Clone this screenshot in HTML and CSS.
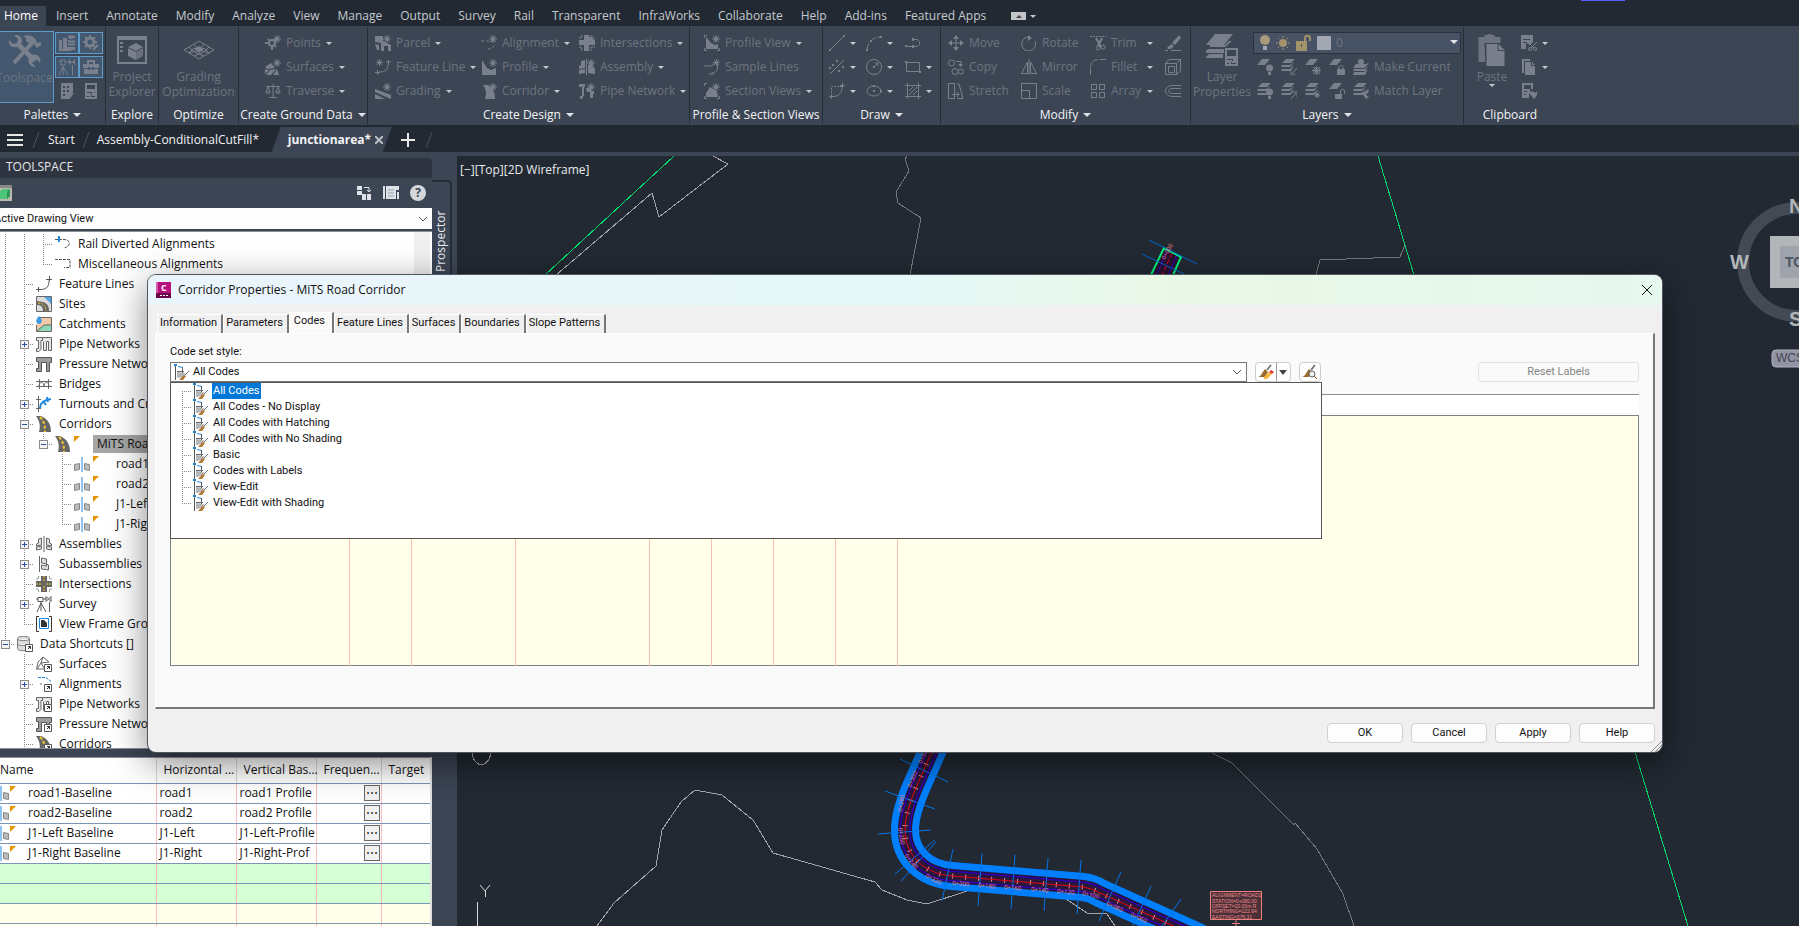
FILE: index.html
```html
<!DOCTYPE html>
<html lang="en">
<head>
    <meta charset="UTF-8">
    <meta name="viewport" content="width=device-width, initial-scale=1.0">
    <title>junctionarea - Corridor Properties</title>
    <link rel="stylesheet" href="styles.css">
</head>
<body>
    <!-- icon sprite, everything in it is drawn through <use> -->
    <svg class="sprite" aria-hidden="true">
        <symbol id="star" viewBox="0 0 8 8"><path d="M4 0v8M0 4h8M1 1l6 6M7 1L1 7" stroke="currentColor" stroke-width="1"/><circle cx="4" cy="4" r="2" fill="currentColor"/></symbol>
        <symbol id="tools" viewBox="0 0 32 32"><path fill="none" stroke="currentColor" stroke-width="5" d="M8 8l18 18"/><path fill="currentColor" d="M0 5l4 4 4-1 1-4-4-4c6-1 10 4 7 9l-4 3C3 13-1 10 0 5zM23 20c5-2 10 3 8 8l-4-4-3 1-1 3 4 4c-6 0-9-5-7-9z"/><path d="M23 8L5 28" stroke="currentColor" stroke-width="4"/><path fill="currentColor" d="M14 1c6-2 10 0 13 4l1 3 4-1v3l-4 3-3-4-3 1-5-4c1-3-1-4-3-5z"/></symbol>
        <symbol id="prospect" viewBox="0 0 16 16"><path fill="currentColor" d="M0 5h3v9h9v2H0zM4 3h4v9h8v3H4zM9 1c2-1 5-1 7 0v2c-2 1-5 1-7 0zM9 5c2 1 5 1 7 0v2c-2 1-5 1-7 0zM9 8c2 1 5 1 7 0v2c-2 1-5 1-7 0z"/></symbol>
        <symbol id="gear" viewBox="0 0 16 16"><circle cx="7" cy="7" r="4" fill="none" stroke="currentColor" stroke-width="3"/><path d="M7 0v3M7 11v3M0 7h3M11 7h3M2 2l2 2M10 10l2 2M12 2l-2 2M4 10l-2 2" stroke="currentColor" stroke-width="2"/><path d="M10 15l5-5" stroke="currentColor" stroke-width="2"/></symbol>
        <symbol id="station" viewBox="0 0 16 16"><path fill="none" stroke="currentColor" d="M0 2h3M2 1h4v5H2zM4 7v9M4 8L0 16M4 8l5 8M7 3h3M13.5 6v10"/><path fill="currentColor" d="M10 0l6 6V0l-6 6z"/></symbol>
        <symbol id="toolbox" viewBox="0 0 16 16"><path fill="currentColor" d="M0 5h16v4h-5V8H9v1H7V8H5v1H0zM1 10h4v1h2v-1h2v1h2v-1h4v5H1z"/><path d="M5 5V2h6v3" fill="none" stroke="currentColor" stroke-width="2"/></symbol>
        <symbol id="building" viewBox="0 0 16 16"><path fill="currentColor" fill-rule="evenodd" d="M2 0h12v9l-3 3v4H2zM4 3v2h2V3zm4 0v2h2V3zM4 7v2h2V7zm4 0v2h2V7zm-4 4v2h2v-2z"/><path d="M10 15l4-5" stroke="currentColor" stroke-width="2"/></symbol>
        <symbol id="panelset" viewBox="0 0 16 16"><path fill="currentColor" fill-rule="evenodd" d="M2 0h12v16H2zM4 2v4h8V2zm0 7v1h4v1h1V9zm7 0v1h1V9zm-7 4v1h2v-1zm4-1v2h4v-1H9v-1z"/></symbol>
        <symbol id="project" viewBox="0 0 32 32"><path fill="none" stroke="currentColor" stroke-width="2" d="M2 4h28v25H2z"/><path fill="currentColor" d="M1 2h30v4H1zM4 8h3v2H4zM4 12h3v2H4zM4 16h3v2H4zM12 14l8 4v8l-8-4z"/><path fill="currentColor" opacity=".75" d="M20 18l7-4v8l-7 4z"/><path fill="currentColor" d="M12 13l8-4 7 4-7 4z"/></symbol>
        <symbol id="optimize" viewBox="0 0 32 20"><path fill="none" stroke="currentColor" stroke-width="1" d="M1 10L16 1l15 9-15 9zM6 7l5 5 10 4M11 4l5 6 11 3M26 7l-5 5-10 4M21 4l-5 6-10 3M6 13l5-5 5 1 5-1 5 5"/><path fill="currentColor" d="M11 9l5-3 5 3-5 4z"/></symbol>
        <symbol id="points" viewBox="0 0 16 16"><circle cx="7" cy="8" r="3" fill="none" stroke="currentColor" stroke-width="2"/><path stroke="currentColor" stroke-width="2" d="M0 8h3M7 12v3M4 5l-1-1M10 11l1 1"/><use href="#star" x="8" y="0" width="8" height="8"/></symbol>
        <symbol id="surfaces" viewBox="0 0 16 16"><path fill="currentColor" d="M0 8l6-4 4 5-7 1zM0 10l4 1-4 4zM5 11l6-1-5 6H1zM12 10l2 6H8z"/><use href="#star" x="8" y="0" width="8" height="8"/></symbol>
        <symbol id="traverse" viewBox="0 0 16 16"><path fill="none" stroke="currentColor" d="M1 3.5h14M8 1v14M4 14.5h8M1 9l2-5 2 5zM11 9l2-5 2 5zM1 9c0 2 4 2 4 0M11 9c0 2 4 2 4 0"/></symbol>
        <symbol id="parcel" viewBox="0 0 16 16"><path fill="currentColor" d="M0 1h8v5l8 4v6h-3v-5H9v5H6V8L0 7zM0 9l4 1v5H2z"/><use href="#star" x="8" y="0" width="8" height="8"/></symbol>
        <symbol id="feature" viewBox="0 0 16 16"><path fill="none" stroke="currentColor" d="M0 13.5h5M2.5 11v5M11 3h5M13.5 1v5M4 13c7 0 9-3 9-7"/><use href="#star" x="1" y="0" width="7" height="7"/></symbol>
        <symbol id="grading" viewBox="0 0 16 16"><path fill="currentColor" d="M0 6l16 6v4L0 9zM0 11l10 5H0z"/><use href="#star" x="8" y="0" width="8" height="8"/></symbol>
        <symbol id="align" viewBox="0 0 16 16"><path fill="none" stroke="currentColor" stroke-dasharray="3 2" d="M0 6h8c7 0 6 8 0 8H5"/><use href="#star" x="8" y="0" width="8" height="8"/></symbol>
        <symbol id="profile" viewBox="0 0 16 16"><path fill="currentColor" d="M1 1l5 8 4 2 5-2v7H1z"/><use href="#star" x="8" y="0" width="8" height="8"/></symbol>
        <symbol id="corridor" viewBox="0 0 16 16"><path fill="currentColor" d="M2 2h5c5 3 7 7 7 14H4c2-5 1-10-2-14z"/><use href="#star" x="8" y="0" width="8" height="8"/></symbol>
        <symbol id="inter" viewBox="0 0 16 16"><path fill="currentColor" d="M5 0h5v5h6v5h-6v6H5v-6H0V5h5z"/><path fill="none" stroke="currentColor" d="M0 3h2l1-3M0 12h2l1 4M12 16v-4h4"/><use href="#star" x="8" y="0" width="8" height="8"/></symbol>
        <symbol id="assembly" viewBox="0 0 16 16"><path fill="currentColor" d="M2 2l4-1v8l-6 1V7l2-1zM0 11l6-1v4l-6 1zM9 6h4l3 4v5l-7-1z"/><path d="M7.5 0v16" stroke="currentColor"/><use href="#star" x="8" y="0" width="8" height="8"/></symbol>
        <symbol id="pipe" viewBox="0 0 16 16"><path fill="currentColor" d="M0 1h6v3H5v8l-2 4H1v-3h2V4H0zM7 5h5v3h3v3h-1v4h-3V9H8z"/><use href="#star" x="8" y="0" width="8" height="8"/></symbol>
        <symbol id="pview" viewBox="0 0 16 16"><path fill="none" stroke="currentColor" d="M3 .5H.5V3M.5 13v2.5H3M13 15.5h2.5V13"/><path fill="currentColor" d="M2 2l5 6 4 2 3-1v5H2z"/><use href="#star" x="8" y="0" width="8" height="8"/></symbol>
        <symbol id="sline" viewBox="0 0 16 16"><path fill="none" stroke="currentColor" d="M0 7h6c3 0 3-3 7-3M13.5 2v7c0 3-3 5-6 5M5 15h5"/><use href="#star" x="9" y="0" width="7" height="7"/></symbol>
        <symbol id="sview" viewBox="0 0 16 16"><path fill="none" stroke="currentColor" d="M3 .5H.5V3M.5 13v2.5H3M13 15.5h2.5V13"/><path fill="currentColor" d="M2 10l4-6 7 4 1 6H2z"/><use href="#star" x="8" y="0" width="8" height="8"/></symbol>
        <symbol id="line" viewBox="0 0 16 16"><path stroke="currentColor" d="M1 15L15 1"/><path fill="currentColor" d="M0 14h2v2H0zM14 0h2v2h-2z"/></symbol>
        <symbol id="arc" viewBox="0 0 16 16"><path fill="none" stroke="currentColor" stroke-dasharray="7 2" d="M1 15C2 6 7 2 15 2"/><path fill="currentColor" d="M0 14h2v2H0zM14 1h2v2h-2zM4 5h2v2H4z"/></symbol>
        <symbol id="pline" viewBox="0 0 16 16"><path fill="none" stroke="currentColor" d="M8 4.5h3c5 0 5 7 0 7H8M1 11.5h6"/><path fill="currentColor" d="M0 10h2v2H0zM7 10h2v3H7zM7 3h2v3H7z"/></symbol>
        <symbol id="xline" viewBox="0 0 16 16"><path stroke="currentColor" d="M1 15L15 1"/><path fill="currentColor" d="M7 1h2v2H7zM3 5h2v2H3zM13 7h2v2h-2zM9 11h2v2H9zM0 8h2v2H0z"/></symbol>
        <symbol id="circle" viewBox="0 0 16 16"><circle cx="8" cy="8" r="7.5" fill="none" stroke="currentColor"/><path stroke="currentColor" fill="none" d="M8 8l4-4M9 4h3v3"/><path fill="currentColor" d="M7 7h2v2H7z"/></symbol>
        <symbol id="rect" viewBox="0 0 16 16"><path fill="none" stroke="currentColor" d="M1.5 3.5h13v9h-13z"/><path fill="currentColor" d="M0 2h2v2H0zM14 12h2v2h-2z"/></symbol>
        <symbol id="pcurve" viewBox="0 0 16 16"><path fill="none" stroke="currentColor" stroke-dasharray="2 1" d="M2.5 13V3.5H13"/><path fill="none" stroke="currentColor" d="M4 13.5c6 0 9-4 9-9M13.5 0v5M0 13.5h5M2.5 11v5M11 2.5h5"/></symbol>
        <symbol id="ellipse" viewBox="0 0 16 16"><ellipse cx="8" cy="8" rx="7" ry="5" fill="none" stroke="currentColor"/><path fill="currentColor" d="M7 7h2v2H7zM7 2h2v2H7zM14 7h2v2h-2z"/></symbol>
        <symbol id="hatch" viewBox="0 0 16 16"><path fill="none" stroke="currentColor" d="M2.5 0v16M13.5 0v16M0 2.5h16M0 13.5h16M4 8l4-4M4 12l8-8M8 12l4-4"/></symbol>
        <symbol id="move" viewBox="0 0 16 16"><path stroke="currentColor" d="M8 2v12M2 8h12"/><path fill="currentColor" d="M8 0l3 4H5zM8 16l3-4H5zM0 8l4-3v6zM16 8l-4-3v6z"/></symbol>
        <symbol id="copy" viewBox="0 0 16 16"><g fill="none" stroke="currentColor"><circle cx="3.5" cy="4" r="3"/><circle cx="7" cy="12.5" r="3"/><circle cx="13" cy="12.5" r="2.5"/><path d="M8 2.5h5v3"/></g><path fill="currentColor" d="M10 5h5l-2 3z"/></symbol>
        <symbol id="stretch" viewBox="0 0 16 16"><path fill="none" stroke="currentColor" d="M.5.5h6v15h-6zM9 1h2l4 14.5H9"/><path fill="none" stroke="currentColor" d="M4 11.5h7M9 9l2 2.5L9 14"/></symbol>
        <symbol id="rotate" viewBox="0 0 16 16"><path fill="none" stroke="currentColor" d="M8 2a7 7 0 1 0 6 4"/><path fill="currentColor" d="M7 0l4 3-4 3z"/></symbol>
        <symbol id="mirror" viewBox="0 0 16 16"><path fill="none" stroke="currentColor" d="M6.5 3v11.5h-6zM9.5 3v11.5h6zM8 0v16"/></symbol>
        <symbol id="scale" viewBox="0 0 16 16"><path fill="none" stroke="currentColor" d="M.5.5h15v15H.5zM.5 7.5h8v8"/></symbol>
        <symbol id="trim" viewBox="0 0 16 16"><path fill="none" stroke="currentColor" stroke-dasharray="2 1" d="M0 1.5h16"/><path stroke="currentColor" stroke-width="2" d="M6 3l5 9M12 3L8 11"/><g fill="none" stroke="currentColor"><circle cx="8" cy="13" r="2"/><circle cx="13" cy="12" r="2"/></g></symbol>
        <symbol id="fillet" viewBox="0 0 16 16"><path fill="none" stroke="currentColor" d="M.5 16V9M.5 8C1 3 4 1 8 .5M10 .5h6"/></symbol>
        <symbol id="array" viewBox="0 0 16 16"><path fill="none" stroke="currentColor" d="M1.5 1.5h5v5h-5zM9.5 1.5h5v5h-5zM1.5 9.5h5v5h-5zM9.5 9.5h5v5h-5z"/></symbol>
        <symbol id="erase" viewBox="0 0 16 16"><path fill="currentColor" d="M14 0l2 3-6 7-3-2zM6 9l3 2-3 3H3l-1-1z"/><path stroke="currentColor" d="M0 15.5h3M6 15.5h10"/></symbol>
        <symbol id="box" viewBox="0 0 16 16"><path fill="none" stroke="currentColor" d="M.5 4.5h11v11H.5zM3.5 7.5h6v6h-6zM.5 4.5L4 .5h11.5V12l-4 3.5M11.5 4.5l4-4"/></symbol>
        <symbol id="offset" viewBox="0 0 16 16"><path fill="none" stroke="currentColor" d="M16 2.5H8c-10 0-10 11 0 11h8M16 5.5H8c-6 0-6 5 0 5h8"/></symbol>
        <symbol id="layerbig" viewBox="0 0 32 32"><path fill="currentColor" d="M9 0h18l-9 11H0zM4 13h15l7-6h-3l-4 4H4zM0 17l2-2h18v4H0zM0 23l3-3h14v4H0z"/><path fill="#3c4554" d="M18 13h14v19H18z"/><path fill="currentColor" fill-rule="evenodd" d="M19 14h13v18H19zM21 16v6h9v-6zm0 9v1h5v1h1v-2zm0 4v1h2v-1zm4-1v2h5v-1h-4v-1z"/></symbol>
        <symbol id="lay1" viewBox="0 0 16 16"><path fill="currentColor" d="M5 0h8L8 6H0z"/></symbol>
        <symbol id="lay3" viewBox="0 0 16 16"><path fill="currentColor" d="M5 0h9l-4 4H1zM1 6h8l4-3-3 4-1 1H0zM1 10h8l4-4-2 4-2 2H0z"/></symbol>
        <symbol id="lbulb" viewBox="0 0 16 16"><use href="#lay1"/><circle cx="12.5" cy="9" r="3.5" fill="currentColor"/><path fill="currentColor" d="M11 13h3v3h-3z"/></symbol>
        <symbol id="liso" viewBox="0 0 16 16"><use href="#lay3"/><path fill="none" stroke="currentColor" d="M16 9l-5 6M10 11v5h5"/></symbol>
        <symbol id="lfreeze" viewBox="0 0 16 16"><use href="#lay1"/><path fill="none" stroke="currentColor" d="M11.5 7v9M7 11.5h9M8 8l7 7M15 8l-7 7"/><circle cx="11.5" cy="11.5" r="3" fill="none" stroke="currentColor"/></symbol>
        <symbol id="llock" viewBox="0 0 16 16"><use href="#lay1"/><path fill="currentColor" d="M8 10h8v6H8z"/><path fill="none" stroke="currentColor" d="M10 10V8c0-2 4-2 4 0v2"/></symbol>
        <symbol id="lmake" viewBox="0 0 16 16"><circle cx="8" cy="3" r="3" fill="currentColor"/><path fill="currentColor" d="M3 5h10l3-1-5 5H0zM1 10h10l4-3-3 5H0zM1 13h10l4-3-3 6H0z"/></symbol>
        <symbol id="lon" viewBox="0 0 16 16"><use href="#lay3"/><circle cx="12.5" cy="9" r="3.5" fill="currentColor"/><path fill="currentColor" d="M11 13h3v3h-3z"/></symbol>
        <symbol id="luniso" viewBox="0 0 16 16"><use href="#lay3"/><path fill="none" stroke="currentColor" d="M10 16l5-6M11 9h5v5"/></symbol>
        <symbol id="lthaw" viewBox="0 0 16 16"><use href="#lay3"/><circle cx="12" cy="12" r="2" fill="currentColor"/><path stroke="currentColor" stroke-dasharray="1 1" d="M12 8v8M8 12h8M9 9l6 6M15 9l-6 6"/></symbol>
        <symbol id="lunlock" viewBox="0 0 16 16"><use href="#lay1"/><path fill="currentColor" d="M6 11h7v5H6z"/><path fill="none" stroke="currentColor" d="M11.5 11V8c0-2 4-2 4 0v3"/></symbol>
        <symbol id="lmatch" viewBox="0 0 16 16"><use href="#lay3"/><path fill="currentColor" d="M8 9l3 1 4-4 1 2-3 4 3 2-3 2z"/></symbol>
        <symbol id="bulb" viewBox="0 0 10 16"><circle cx="5" cy="5" r="5" fill="#a89a78"/><path fill="#9fa5ad" d="M3 11h4v4H3z"/></symbol>
        <symbol id="sun" viewBox="0 0 16 16"><circle cx="8" cy="8" r="4" fill="#a4926a"/><path stroke="#a4926a" d="M8 1v2M8 13v2M1 8h2M13 8h2M3 3l1 1M12 12l1 1M13 3l-1 1M4 12l-1 1"/></symbol>
        <symbol id="lock" viewBox="0 0 16 16"><path fill="#a4926a" fill-rule="evenodd" d="M0 6h11v10H0zM5 9v3h1V9z"/><path fill="none" stroke="#a4926a" stroke-width="2" d="M9 6V3c0-3 5-3 5 0v3"/></symbol>
        <symbol id="paste" viewBox="0 0 27 32"><path fill="currentColor" opacity=".8" d="M0 3h6V1h3V0h4v1h3v2h6v6H7v19H0z"/><path fill="#3c4554" d="M6 9h14v4h7v19H7z"/><path fill="currentColor" d="M8 10h11v7h7v15H8zM20 10l6 6h-6z"/></symbol>
        <symbol id="cut" viewBox="0 0 16 16"><path fill="currentColor" fill-rule="evenodd" d="M0 0h12v7l-3 3-4-2v6H0zM2 4v1h7V4zm0 3v1h4V7z"/><path stroke="currentColor" d="M7 7l6 6M16 7l-6 6"/><g fill="none" stroke="currentColor"><circle cx="9" cy="14" r="1.5"/><circle cx="14" cy="14" r="1.5"/></g></symbol>
        <symbol id="pages" viewBox="0 0 16 16"><path fill="currentColor" d="M1 0h8v2H3v12H1zM4 3h6v4h4v9H4zM11 3l3 3h-3z"/></symbol>
        <symbol id="pmatch" viewBox="0 0 16 16"><path fill="currentColor" fill-rule="evenodd" d="M1 0h11v6H9v4H8v5H1zM3 2v4h7V2zm0 6v1h3V8zm0 3v1h2v-1z"/><path fill="currentColor" d="M8 10l3-2 3 2 2-2v4l-3 4z"/></symbol>

        <symbol id="t-rail" viewBox="0 0 16 16"><path fill="none" stroke="#555" stroke-dasharray="3 1" d="M0 3.5h9c7 0 7 7 0 8.5"/><path fill="#1e87e0" d="M3 0h2v6H3z"/></symbol>
        <symbol id="t-misc" viewBox="0 0 16 16"><path fill="none" stroke="#555" stroke-dasharray="3 1" d="M0 3.5h15v8H9"/></symbol>
        <symbol id="t-feature" viewBox="0 0 16 16"><path fill="none" stroke="#555" d="M0 13.5h6M2.5 11v5M10 3.5h6M13.5 0v5M4 13.5c7 0 9-3 9-9"/></symbol>
        <symbol id="t-sites" viewBox="0 0 16 16"><path fill="#ddd" stroke="#666" d="M.5.5h15v15H.5z"/><path fill="#56a5e6" d="M8 1h7v7z"/><path fill="#666" d="M1 5l6 1c4 1 6 4 6 9H7C7 11 5 9 1 9z"/><path stroke="#f4c430" fill="none" stroke-dasharray="2 1" d="M2 7c5 0 8 3 8 8"/></symbol>
        <symbol id="t-catch" viewBox="0 0 16 16"><path fill="#f3c9a8" stroke="#666" d="M3.5 1.5h12v14h-15V9"/><path fill="#8fd9b6" d="M1 14l7-5 7-1v7H1z"/><path fill="#3b9be8" d="M3 0c5 5 2 8 0 8s-5-3 0-8z"/><path stroke="#666" fill="none" d="M1 15l7-6h7"/></symbol>
        <symbol id="t-pipe" viewBox="0 0 16 16"><path fill="#e4e4e4" stroke="#666" d="M.5 1.5h6v3H5v9l-2 2H.5v-3h2v-8h-2zM7 1.5h8.5v13h-3v-9h-2v9h-3v-9"/></symbol>
        <symbol id="t-press" viewBox="0 0 16 16"><path fill="#9c9c9c" stroke="#555" d="M.5 1.5h15v5h-2v9h-3v-9h-5v9h-5v-3h2v-7h-2z"/></symbol>
        <symbol id="t-bridge" viewBox="0 0 16 16"><path fill="none" stroke="#666" d="M0 5.5h16M0 10.5h16M3.5 3v10M12.5 3v10M3 10c1-5 4-5 5 0 1-5 4-5 5 0"/></symbol>
        <symbol id="t-turn" viewBox="0 0 16 16"><path fill="none" stroke="#666" d="M2.5 0v16M0 3.5h5M0 12.5h5"/><path fill="none" stroke="#1e87e0" stroke-width="2" d="M4 12c0-5 3-8 11-9M7 5l3 4M11 1l1 5"/></symbol>
        <symbol id="t-corr" viewBox="0 0 16 16"><path fill="#666" d="M0 0h5c7 3 10 8 10 16H3C5 9 3 4 0 0z"/><path fill="none" stroke="#f4c430" stroke-width="2" stroke-dasharray="3 2" d="M4 1c4 4 5 8 5 15"/></symbol>
        <symbol id="t-base" viewBox="0 0 16 16"><path fill="#bbb" stroke="#888" d="M.5 8.5l5-1v6l-5 1zM15.5 8.5l-5-1v6l5 1z"/><path stroke="#1e87e0" d="M8 1v15"/></symbol>
        <symbol id="t-asm" viewBox="0 0 16 16"><path fill="#ddd" stroke="#666" d="M2.5 3l3-1v7l-5 1V8l2-1zM13.5 3l-3-1v7l5 1V8l-2-1zM.5 11l5-1v3l-5 1zM15.5 11l-5-1v3l5 1z"/><path stroke="#666" d="M8 0v16"/></symbol>
        <symbol id="t-sub" viewBox="0 0 16 16"><path fill="none" stroke="#666" d="M3.5 0v16"/><path fill="#ddd" stroke="#666" d="M5.5 2l5 1v5l2 1v5l-7-1V9l5 1V8l-5-1z"/></symbol>
        <symbol id="t-int" viewBox="0 0 16 16"><path fill="#666" d="M5 0h6v5h5v6h-5v5H5v-5H0V5h5z"/><path fill="none" stroke="#999" d="M0 3h2l1-3M16 3h-2l-1-3M0 13h2l1 3M16 13h-2l-1 3"/><path stroke="#f4c430" stroke-dasharray="2 1" d="M8 0v6M8 10v6M0 8h6M10 8h6"/></symbol>
        <symbol id="t-survey" viewBox="0 0 16 16"><path fill="none" stroke="#555" d="M2 1.5h5v4H2zM5 6v9M5 7L1 16M5 7l5 9M13.5 6v10M10 .5l5 5V.5l-5 5zM0 3h2M7 3h3"/></symbol>
        <symbol id="t-frame" viewBox="0 0 16 16"><path fill="none" stroke="#333" d="M3 .5H.5v15H3M13 .5h2.5v15H13"/><path fill="none" stroke="#1e87e0" d="M3.5 2.5h9v10h-9z"/><path fill="#333" d="M5 4h3l3 3v4H5z"/></symbol>
        <symbol id="t-ref" viewBox="0 0 16 16"><path fill="#fff" stroke="#555" d="M8.5 8.5h7v7h-7z"/><path fill="none" stroke="#333" d="M11 13l3-3M11 10.5h2.5V13"/></symbol>
        <symbol id="t-data" viewBox="0 0 16 16"><path fill="#ddd" stroke="#777" d="M.5 2.5c0-3 12-3 12 0v10c0 3-12 3-12 0zM.5 3c0 2 12 2 12 0M.5 8c0 2 12 2 12 0"/><use href="#t-ref"/></symbol>
        <symbol id="t-surf" viewBox="0 0 16 16"><path fill="none" stroke="#666" d="M.5 13.5L2 6l5-5 6 5-8 1-4 6h7M7 1L5 7l3 5"/><use href="#t-ref"/></symbol>
        <symbol id="t-align" viewBox="0 0 16 16"><path fill="none" stroke="#1e87e0" stroke-dasharray="3 1" d="M2 1.5h8l5 4"/><path stroke="#666" stroke-dasharray="2 2" d="M4 8h4"/><use href="#t-ref"/></symbol>
        <symbol id="t-pipe2" viewBox="0 0 16 16"><use href="#t-pipe"/><use href="#t-ref"/></symbol>
        <symbol id="t-press2" viewBox="0 0 16 16"><use href="#t-press"/><use href="#t-ref"/></symbol>
        <symbol id="t-corr2" viewBox="0 0 16 16"><use href="#t-corr"/><use href="#t-ref"/></symbol>
        <symbol id="flag" viewBox="0 0 6 6"><path fill="#e59400" d="M0 0h6L0 6z"/></symbol>
        <symbol id="codeset" viewBox="0 0 16 16"><path stroke="#555" d="M1.5 2v14"/><path fill="#1e87e0" d="M0 0h3v2H0z"/><path stroke="#1e87e0" d="M4 2.5l5 1"/><path fill="#b5b5b5" d="M3 8l8 1-1 4-7 1z"/><path fill="none" stroke="#666" d="M3 7.5h7M8.5 3v6M15 7l-4 4"/><path fill="#b0722e" d="M10 11l2 1-3 4H5z"/></symbol>
        <symbol id="brush" viewBox="0 0 16 16"><path stroke="#777" stroke-width="2" d="M13 1L9 6"/><path fill="#9a6a30" d="M7 5l3 3-3 5H0c4-1 4-5 7-8z"/></symbol>
        <symbol id="chev" viewBox="0 0 10 6"><path fill="none" stroke="#555" d="M1 1l4 4 4-4"/></symbol>
    </svg>

    <nav class="menubar">
        <a class="menu active" href="#">Home</a>
        <a class="menu" href="#">Insert</a>
        <a class="menu" href="#">Annotate</a>
        <a class="menu" href="#">Modify</a>
        <a class="menu" href="#">Analyze</a>
        <a class="menu" href="#">View</a>
        <a class="menu" href="#">Manage</a>
        <a class="menu" href="#">Output</a>
        <a class="menu" href="#">Survey</a>
        <a class="menu" href="#">Rail</a>
        <a class="menu" href="#">Transparent</a>
        <a class="menu" href="#">InfraWorks</a>
        <a class="menu" href="#">Collaborate</a>
        <a class="menu" href="#">Help</a>
        <a class="menu" href="#">Add-ins</a>
        <a class="menu" href="#">Featured Apps</a>
        <button class="collapse" aria-label="Minimize ribbon"><span class="collapse-box"><i class="up"></i></span><i class="caret"></i></button>
        <span class="capture-mark"></span>
    </nav>

    <header class="ribbon">
        <section class="panel palettes">
            <div class="tools">
                <button class="big on"><svg class="i32"><use href="#tools"/></svg>Toolspace</button>
                <div class="small-grid">
                    <button class="sq on" aria-label="Prospector"><svg><use href="#prospect"/></svg></button>
                    <button class="sq on" aria-label="Settings"><svg><use href="#gear"/></svg></button>
                    <button class="sq on" aria-label="Survey"><svg><use href="#station"/></svg></button>
                    <button class="sq on" aria-label="Toolbox"><svg><use href="#toolbox"/></svg></button>
                    <button class="sq" aria-label="Sheets"><svg><use href="#building"/></svg></button>
                    <button class="sq" aria-label="Properties"><svg><use href="#panelset"/></svg></button>
                </div>
            </div>
            <h2>Palettes <i class="caret wide"></i></h2>
        </section>
        <section class="panel explore">
            <div class="tools"><button class="big"><svg class="i32"><use href="#project"/></svg>Project<br>Explorer</button></div>
            <h2>Explore</h2>
        </section>
        <section class="panel optimize">
            <div class="tools"><button class="big"><svg class="i32"><use href="#optimize"/></svg>Grading<br>Optimization</button></div>
            <h2>Optimize</h2>
        </section>
        <section class="panel ground">
            <div class="tools cmds">
                <button class="cmd"><svg><use href="#points"/></svg>Points<i class="caret"></i></button>
                <button class="cmd"><svg><use href="#surfaces"/></svg>Surfaces<i class="caret"></i></button>
                <button class="cmd"><svg><use href="#traverse"/></svg>Traverse<i class="caret"></i></button>
            </div>
            <h2>Create Ground Data <i class="caret wide"></i></h2>
        </section>
        <section class="panel design">
            <div class="tools cmds">
                <button class="cmd"><svg><use href="#parcel"/></svg>Parcel<i class="caret"></i></button>
                <button class="cmd"><svg><use href="#align"/></svg>Alignment<i class="caret"></i></button>
                <button class="cmd"><svg><use href="#inter"/></svg>Intersections<i class="caret"></i></button>
                <button class="cmd"><svg><use href="#feature"/></svg>Feature Line<i class="caret"></i></button>
                <button class="cmd"><svg><use href="#profile"/></svg>Profile<i class="caret"></i></button>
                <button class="cmd"><svg><use href="#assembly"/></svg>Assembly<i class="caret"></i></button>
                <button class="cmd"><svg><use href="#grading"/></svg>Grading<i class="caret"></i></button>
                <button class="cmd"><svg><use href="#corridor"/></svg>Corridor<i class="caret"></i></button>
                <button class="cmd"><svg><use href="#pipe"/></svg>Pipe Network<i class="caret"></i></button>
            </div>
            <h2>Create Design <i class="caret wide"></i></h2>
        </section>
        <section class="panel views">
            <div class="tools cmds">
                <button class="cmd"><svg><use href="#pview"/></svg>Profile View<i class="caret"></i></button>
                <button class="cmd"><svg><use href="#sline"/></svg>Sample Lines</button>
                <button class="cmd"><svg><use href="#sview"/></svg>Section Views<i class="caret"></i></button>
            </div>
            <h2>Profile &amp; Section Views</h2>
        </section>
        <section class="panel draw">
            <div class="tools cmds">
                <button class="cmd" aria-label="Line"><svg><use href="#line"/></svg><i class="caret"></i></button>
                <button class="cmd" aria-label="Arc"><svg><use href="#arc"/></svg><i class="caret"></i></button>
                <button class="cmd" aria-label="Polyline"><svg><use href="#pline"/></svg></button>
                <button class="cmd" aria-label="Construction line"><svg><use href="#xline"/></svg><i class="caret"></i></button>
                <button class="cmd" aria-label="Circle"><svg><use href="#circle"/></svg><i class="caret"></i></button>
                <button class="cmd" aria-label="Rectangle"><svg><use href="#rect"/></svg><i class="caret"></i></button>
                <button class="cmd" aria-label="Curve"><svg><use href="#pcurve"/></svg><i class="caret"></i></button>
                <button class="cmd" aria-label="Ellipse"><svg><use href="#ellipse"/></svg><i class="caret"></i></button>
                <button class="cmd" aria-label="Hatch"><svg><use href="#hatch"/></svg><i class="caret"></i></button>
            </div>
            <h2>Draw <i class="caret wide"></i></h2>
        </section>
        <section class="panel modify">
            <div class="tools cmds">
                <button class="cmd"><svg><use href="#move"/></svg>Move</button>
                <button class="cmd"><svg><use href="#rotate"/></svg>Rotate</button>
                <button class="cmd split"><svg><use href="#trim"/></svg>Trim<i class="caret"></i></button>
                <button class="cmd" aria-label="Erase"><svg><use href="#erase"/></svg></button>
                <button class="cmd"><svg><use href="#copy"/></svg>Copy</button>
                <button class="cmd"><svg><use href="#mirror"/></svg>Mirror</button>
                <button class="cmd split"><svg><use href="#fillet"/></svg>Fillet<i class="caret"></i></button>
                <button class="cmd" aria-label="Explode"><svg><use href="#box"/></svg></button>
                <button class="cmd"><svg><use href="#stretch"/></svg>Stretch</button>
                <button class="cmd"><svg><use href="#scale"/></svg>Scale</button>
                <button class="cmd split"><svg><use href="#array"/></svg>Array<i class="caret"></i></button>
                <button class="cmd" aria-label="Offset"><svg><use href="#offset"/></svg></button>
            </div>
            <h2>Modify <i class="caret wide"></i></h2>
        </section>
        <section class="panel layers">
            <div class="tools">
                <button class="big"><svg class="i32"><use href="#layerbig"/></svg>Layer<br>Properties</button>
                <div class="layer-tools">
                    <button class="layer-combo">
                        <svg class="bulb"><use href="#bulb"/></svg><svg><use href="#sun"/></svg><svg><use href="#lock"/></svg>
                        <span class="swatch"></span><span>0</span><i class="caret wide"></i>
                    </button>
                    <div class="layer-row">
                        <button class="cmd" aria-label="Off"><svg><use href="#lbulb"/></svg></button>
                        <button class="cmd" aria-label="Isolate"><svg><use href="#liso"/></svg></button>
                        <button class="cmd" aria-label="Freeze"><svg><use href="#lfreeze"/></svg></button>
                        <button class="cmd" aria-label="Lock"><svg><use href="#llock"/></svg></button>
                        <button class="cmd"><svg><use href="#lmake"/></svg>Make Current</button>
                    </div>
                    <div class="layer-row">
                        <button class="cmd" aria-label="On"><svg><use href="#lon"/></svg></button>
                        <button class="cmd" aria-label="Unisolate"><svg><use href="#luniso"/></svg></button>
                        <button class="cmd" aria-label="Thaw"><svg><use href="#lthaw"/></svg></button>
                        <button class="cmd" aria-label="Unlock"><svg><use href="#lunlock"/></svg></button>
                        <button class="cmd"><svg><use href="#lmatch"/></svg>Match Layer</button>
                    </div>
                </div>
            </div>
            <h2>Layers <i class="caret wide"></i></h2>
        </section>
        <section class="panel clipboard">
            <div class="tools">
                <button class="big"><svg class="i32"><use href="#paste"/></svg>Paste<i class="caret"></i></button>
                <div class="cmds">
                    <button class="cmd" aria-label="Cut"><svg><use href="#cut"/></svg><i class="caret"></i></button>
                    <button class="cmd" aria-label="Copy clip"><svg><use href="#pages"/></svg><i class="caret"></i></button>
                    <button class="cmd" aria-label="Match properties"><svg><use href="#pmatch"/></svg></button>
                </div>
            </div>
            <h2>Clipboard</h2>
        </section>
    </header>

    <div class="doctabs">
        <button class="burger" aria-label="Menu"><svg viewBox="0 0 16 12"><path stroke="#e6e6e6" stroke-width="2" d="M0 1h16M0 6h16M0 11h16"/></svg></button>
        <svg class="slash" viewBox="0 0 8 16"><path stroke="#4b525d" d="M1 16L7 0"/></svg>
        <a class="doctab start" href="#">Start</a>
        <svg class="slash" viewBox="0 0 8 16"><path stroke="#4b525d" d="M1 16L7 0"/></svg>
        <a class="doctab file" href="#">Assembly-ConditionalCutFill*</a>
        <div class="doctab current"><a href="#">junctionarea*</a><button aria-label="Close tab"><svg viewBox="0 0 8 8"><path stroke="#b9bec5" stroke-width="2" d="M0 0l8 8M8 0L0 8"/></svg></button></div>
        <button class="plus" aria-label="New tab"><svg viewBox="0 0 14 14"><path stroke="#e6e6e6" stroke-width="2" d="M7 0v14M0 7h14"/></svg></button>
        <svg class="slash" viewBox="0 0 8 16"><path stroke="#4b525d" d="M1 16L7 0"/></svg>
    </div>

    <main class="workspace">
        <aside class="toolspace">
            <div class="ts-column">
                <div class="ts-title">TOOLSPACE</div>
                <div class="ts-bar">
                    <svg class="cube" viewBox="0 0 12 16"><path fill="#b9b9b0" d="M0 0h12v16H0z"/><path fill="#888" d="M0 0h12v3H0z"/><path fill="#4cc47a" d="M0 6l3-2h7v7l-3 3H0z"/><path fill="#2c9455" d="M7 7l3-3v7l-3 3z"/></svg>
                    <button aria-label="Item view"><svg viewBox="0 0 16 16"><path fill="#dfe2e6" d="M1 1h5v4H1zM1 6h5v4H1zM6 9h4v6H6zM11 9h4v6h-4z"/><path fill="none" stroke="#dfe2e6" d="M8 2.5h5V6M11 5l2 2 2-2"/></svg></button>
                    <button aria-label="Panorama"><svg viewBox="0 0 16 16"><path fill="#dfe2e6" d="M0 1h2v13H0zM3 1h13v4h-3v9H3zM14 7h2v7h-2z"/><path stroke="#9ba1aa" d="M5 5h6M5 8h6M5 11h6"/></svg></button>
                    <button class="help" aria-label="Help">?</button>
                </div>
                <div class="ts-view">
                    <select aria-label="View"><option>Active Drawing View</option></select>
                    <svg><use href="#chev"/></svg>
                </div>
                <div class="tree-box">
                    <ul class="tree">
                        <li><i class="v"></i><i class="v"></i><i class="t"></i><svg><use href="#t-rail"/></svg>Rail Diverted Alignments</li>
                        <li><i class="v"></i><i class="v"></i><i class="l"></i><svg><use href="#t-misc"/></svg>Miscellaneous Alignments</li>
                        <li><i class="v"></i><i class="t"></i><svg><use href="#t-feature"/></svg>Feature Lines</li>
                        <li><i class="v"></i><i class="t"></i><svg><use href="#t-sites"/></svg>Sites</li>
                        <li><i class="v"></i><i class="t"></i><svg><use href="#t-catch"/></svg>Catchments</li>
                        <li><i class="v"></i><i class="t"><b class="plusbox"></b></i><svg><use href="#t-pipe"/></svg>Pipe Networks</li>
                        <li><i class="v"></i><i class="t"></i><svg><use href="#t-press"/></svg>Pressure Networks</li>
                        <li><i class="v"></i><i class="t"></i><svg><use href="#t-bridge"/></svg>Bridges</li>
                        <li><i class="v"></i><i class="t"><b class="plusbox"></b></i><svg><use href="#t-turn"/></svg>Turnouts and Crossings</li>
                        <li><i class="v"></i><i class="t"><b class="minusbox"></b></i><svg><use href="#t-corr"/></svg>Corridors</li>
                        <li><i class="v"></i><i class="v"></i><i class="l"><b class="minusbox"></b></i><svg><use href="#t-corr"/></svg><svg class="flag"><use href="#flag"/></svg><span class="picked">MiTS Road Corridor</span></li>
                        <li><i class="v"></i><i class="v"></i><i></i><i class="t"></i><svg><use href="#t-base"/></svg><svg class="flag"><use href="#flag"/></svg>road1-Baseline</li>
                        <li><i class="v"></i><i class="v"></i><i></i><i class="t"></i><svg><use href="#t-base"/></svg><svg class="flag"><use href="#flag"/></svg>road2-Baseline</li>
                        <li><i class="v"></i><i class="v"></i><i></i><i class="t"></i><svg><use href="#t-base"/></svg><svg class="flag"><use href="#flag"/></svg>J1-Left Baseline</li>
                        <li><i class="v"></i><i class="v"></i><i></i><i class="l"></i><svg><use href="#t-base"/></svg><svg class="flag"><use href="#flag"/></svg>J1-Right Baseline</li>
                        <li><i class="v"></i><i class="t"><b class="plusbox"></b></i><svg><use href="#t-asm"/></svg>Assemblies</li>
                        <li><i class="v"></i><i class="t"><b class="plusbox"></b></i><svg><use href="#t-sub"/></svg>Subassemblies</li>
                        <li><i class="v"></i><i class="t"></i><svg><use href="#t-int"/></svg>Intersections</li>
                        <li><i class="v"></i><i class="t"><b class="plusbox"></b></i><svg><use href="#t-survey"/></svg>Survey</li>
                        <li><i class="v"></i><i class="l"></i><svg><use href="#t-frame"/></svg>View Frame Groups</li>
                        <li><i class="l"><b class="minusbox"></b></i><svg><use href="#t-data"/></svg>Data Shortcuts []</li>
                        <li><i></i><i class="t"></i><svg><use href="#t-surf"/></svg>Surfaces</li>
                        <li><i></i><i class="t"><b class="plusbox"></b></i><svg><use href="#t-align"/></svg>Alignments</li>
                        <li><i></i><i class="t"></i><svg><use href="#t-pipe2"/></svg>Pipe Networks</li>
                        <li><i></i><i class="t"></i><svg><use href="#t-press2"/></svg>Pressure Networks</li>
                        <li><i></i><i class="t"></i><svg><use href="#t-corr2"/></svg>Corridors</li>
                    </ul>
                    <div class="scroll"></div>
                </div>
                <div class="list-box">
                    <table class="baselines">
                        <colgroup><col class="c-name"><col class="c-h"><col class="c-v"><col class="c-f"><col></colgroup>
                        <thead><tr><th>Name</th><th>Horizontal ...</th><th>Vertical Bas...</th><th>Frequen...</th><th>Target</th></tr></thead>
                        <tbody>
                            <tr><td><svg><use href="#t-base"/></svg><svg class="flag"><use href="#flag"/></svg>road1-Baseline</td><td>road1</td><td>road1 Profile</td><td><button aria-label="Frequency">&#8943;</button></td><td></td></tr>
                            <tr><td><svg><use href="#t-base"/></svg><svg class="flag"><use href="#flag"/></svg>road2-Baseline</td><td>road2</td><td>road2 Profile</td><td><button aria-label="Frequency">&#8943;</button></td><td></td></tr>
                            <tr><td><svg><use href="#t-base"/></svg><svg class="flag"><use href="#flag"/></svg>J1-Left Baseline</td><td>J1-Left</td><td>J1-Left-Profile</td><td><button aria-label="Frequency">&#8943;</button></td><td></td></tr>
                            <tr><td><svg><use href="#t-base"/></svg><svg class="flag"><use href="#flag"/></svg>J1-Right Baseline</td><td>J1-Right</td><td>J1-Right-Prof</td><td><button aria-label="Frequency">&#8943;</button></td><td></td></tr>
                            <tr class="green"><td></td><td></td><td></td><td></td><td></td></tr>
                            <tr class="green"><td></td><td></td><td></td><td></td><td></td></tr>
                            <tr class="yellow"><td></td><td></td><td></td><td></td><td></td></tr>
                            <tr class="yellow"><td></td><td></td><td></td><td></td><td></td></tr>
                        </tbody>
                    </table>
                </div>
            </div>
            <div class="side-tabs"><button class="side-tab">Prospector</button></div>
        </aside>

        <div class="canvas">
            <svg class="drawing" viewBox="457 156 1342 770" preserveAspectRatio="xMinYMin slice">
                <defs>
                    <path id="run" d="M937 740L918 783Q905 812 905 830C905 856 925 874 952 876L1083 887Q1092 888 1100 893L1200 938"/>
                </defs>
                <!-- contours -->
                <g class="crisp" fill="none" stroke="#a3a5a8">
                    <path d="M713 156l15 8-69 53-7-24-96 82"/>
                    <path stroke="#74787d" d="M907 156l-2 3 4 12-13 21 2 11 23 15-11 57M1316 275l4-15 80-3 5-12"/>
                    <path d="M597 926l17-23 42-37 6-36 19-28 14-12 27 5 31 25 20 33 102 29 7 8 25 10 20 4 37-12 20-7M1066 899l21 14 20 1 8 12M472 752q1 12 10 13 8-3 9-13"/>
                    <path stroke="#74787d" d="M1210 752l22 11 62 62 1-2 22 26 26 45 11 32"/>
                </g>
                <g class="crisp" stroke="#00dc6e"><path d="M674 156L545 275M1378 156l36 119M1635 752l53 174"/></g>
                <!-- north end of the corridor -->
                <g fill="none">
                    <path fill="#2a1230" d="M1164 248l17 9-8 18h-22z"/>
                    <path stroke="#2b00c0" d="M1168 250l-12 25M1177 255l-9 20"/>
                    <path stroke="#e00020" stroke-dasharray="5 2" d="M1172 253l-10 22"/>
                    <path stroke="#00f07a" stroke-width="2" d="M1151 275l13-27 17 9-8 18"/>
                    <path stroke="#0068d6" d="M1149 240l48 24M1142 254l44 21"/>
                </g>
                <g class="station"><text transform="translate(1165 260) rotate(-62)">0+000</text></g>
                <!-- main corridor run -->
                <g fill="none">
                    <use href="#run" class="road-edge"/>
                    <use href="#run" class="road-bed"/>
                    <use href="#run" class="road-lane"/>
                    <use href="#run" class="road-inner"/>
                    <use href="#run" class="road-ticks"/>
                    <use href="#run" class="road-center"/>
                    <path stroke="#0074e8" d="M900 759l48 23M885 791l50 18M878 834l53-4M895 874l40-34M901 881l35-39M942 901l11-52M978 906l4-53M1011 909l4-54M1044 911l4-53M1077 914l4-54M1099 921l22-49M1133 926l18-40M1162 926l19-27"/>
                </g>
                <g class="station">
                    <text transform="translate(922 764) rotate(-68)">0+320</text>
                    <text transform="translate(911 788) rotate(-68)">0+300</text>
                    <text transform="translate(902 812) rotate(-82)">0+280</text>
                    <text transform="translate(898 828) rotate(82)">0+260</text>
                    <text transform="translate(904 856) rotate(50)">0+240</text>
                    <text transform="translate(925 877) rotate(28)">0+220</text>
                    <text transform="translate(952 885) rotate(5)">0+200</text>
                    <text transform="translate(978 887) rotate(5)">0+180</text>
                    <text transform="translate(1004 889) rotate(5)">0+160</text>
                    <text transform="translate(1031 891) rotate(5)">0+140</text>
                    <text transform="translate(1057 893) rotate(5)">0+120</text>
                    <text transform="translate(1082 895) rotate(12)">0+100</text>
                    <text transform="translate(1106 905) rotate(25)">0+080</text>
                    <text transform="translate(1130 916) rotate(25)">0+060</text>
                </g>
                <!-- alignment label -->
                <g class="label-box">
                    <path fill="#4b3038" stroke="#f08080" d="M1210.5 891.5h51v28h-51zM1236 919v7M1232 923.5h8"/>
                    <text x="1212" y="897">ALIGNMENT=ROAD1</text>
                    <text x="1212" y="903">STATION=0+080.00</text>
                    <text x="1212" y="908">OFFSET=20.00m R</text>
                    <text x="1212" y="913">NORTHING=122.64</text>
                    <text x="1212" y="919">EASTING=376.31</text>
                </g>
                <path fill="none" stroke="#d8d8d8" d="M477.5 902v24M480 885l5 6 5-6M485.5 891v6"/>
                <!-- view cube -->
                <circle cx="1797" cy="262" r="54" fill="none" stroke="#434a53" stroke-width="12"/>
                <path fill="#b3b6b8" d="M1770 236h60v52h-60z"/>
                <path fill="#9fa3ac" d="M1780 246h40v32h-40z"/>
                <rect x="1772" y="350" width="50" height="17" rx="4" fill="#9294a5" stroke="#b0b2c0"/>
                <g class="cube-text">
                    <text x="1730" y="269">W</text><text x="1789" y="213">N</text><text x="1789" y="326">S</text>
                    <text class="top" x="1785" y="267">TOP</text><text class="wcs" x="1776" y="362">WCS</text>
                </g>
            </svg>
            <div class="viewport-label">[&#8722;][Top][2D Wireframe]</div>
        </div>
    </main>

    <div class="dialog" role="dialog" aria-labelledby="dlgTitle">
        <div class="dlg-title">
            <svg class="c3d" viewBox="0 0 15 16"><path fill="#b8127c" d="M0 0h15v11H0z"/><path fill="#6a0748" d="M0 11h15v5H0z"/><path fill="#d95aa8" d="M0 0h2v11H0z"/><text x="5" y="9" font-size="9" font-weight="700" fill="#fff">C</text><path stroke="#fff" d="M4 13.5h2M7 13.5h2M10 13.5h2"/></svg>
            <span id="dlgTitle">Corridor Properties - MiTS Road Corridor</span>
            <button class="close" aria-label="Close"><svg viewBox="0 0 10 10"><path stroke="#111" d="M0 0l10 10M10 0L0 10"/></svg></button>
        </div>
        <div class="dlg-tabs" role="tablist">
            <button role="tab">Information</button>
            <button role="tab">Parameters</button>
            <button role="tab" class="sel">Codes</button>
            <button role="tab">Feature Lines</button>
            <button role="tab">Surfaces</button>
            <button role="tab">Boundaries</button>
            <button role="tab">Slope Patterns</button>
        </div>
        <div class="dlg-page">
            <label for="codeSet">Code set style:</label>
            <div class="style-row">
                <div class="combo"><svg><use href="#codeset"/></svg><select id="codeSet"><option>All Codes</option></select><svg class="chev"><use href="#chev"/></svg></div>
                <div class="edit-split">
                    <button aria-label="Edit style"><svg viewBox="0 0 16 16"><use href="#brush"/><path fill="#f6b73c" d="M6 13l5-5 3 2-5 5H6z"/><path fill="#e33" d="M11 8l2-2 3 2-2 2z"/></svg></button>
                    <button class="arrow" aria-label="More"><i class="caret dark"></i></button>
                </div>
                <button class="pick" aria-label="Inspect style"><svg viewBox="0 0 16 16"><use href="#brush"/><circle cx="10" cy="10" r="3" fill="#eee" stroke="#666"/><path stroke="#9a6a30" d="M12 12l3 3"/></svg></button>
                <button class="reset" disabled>Reset Labels</button>
                <ul class="drop">
                    <li class="hot"><i class="first"></i><svg><use href="#codeset"/></svg><span>All Codes</span></li>
                    <li><i class="t"></i><svg><use href="#codeset"/></svg><span>All Codes - No Display</span></li>
                    <li><i class="t"></i><svg><use href="#codeset"/></svg><span>All Codes with Hatching</span></li>
                    <li><i class="t"></i><svg><use href="#codeset"/></svg><span>All Codes with No Shading</span></li>
                    <li><i class="t"></i><svg><use href="#codeset"/></svg><span>Basic</span></li>
                    <li><i class="t"></i><svg><use href="#codeset"/></svg><span>Codes with Labels</span></li>
                    <li><i class="t"></i><svg><use href="#codeset"/></svg><span>View-Edit</span></li>
                    <li><i class="l"></i><svg><use href="#codeset"/></svg><span>View-Edit with Shading</span></li>
                </ul>
            </div>
            <table class="codes">
                <colgroup><col class="w178"><col class="w62"><col class="w104"><col class="w134"><col class="w62"><col class="w62"><col class="w62"><col class="w62"><col></colgroup>
                <thead><tr><td colspan="9"></td></tr></thead>
                <tbody><tr><td></td><td></td><td></td><td></td><td></td><td></td><td></td><td></td><td></td></tr></tbody>
            </table>
        </div>
        <div class="dlg-foot">
            <button>OK</button>
            <button>Cancel</button>
            <button>Apply</button>
            <button>Help</button>
        </div>
        <svg class="grip" viewBox="0 0 12 12"><path stroke="#8a8a8a" d="M1 12L12 1M5 12l7-7M9 12l3-3"/></svg>
    </div>
</body>
</html>
```
FILE: styles.css
```css
* {
    box-sizing: border-box;
}
body {
    margin: 0;
    height: 100vh;
    overflow: hidden;
    display: flex;
    flex-direction: column;
    background: #222932;
    color: #e8eaed;
    font-family: "Open Sans", "Noto Sans", sans-serif;
    font-size: 12px;
    line-height: 16px;
}
button, select {
    font: inherit;
    color: inherit;
    background: none;
    border: 0;
    padding: 0;
    margin: 0;
    border-radius: 0;
}
select {
    appearance: none;
}
a {
    color: inherit;
    text-decoration: none;
}
h2 {
    margin: 0;
    font-size: 12px;
    font-weight: 400;
}
ul {
    list-style: none;
    margin: 0;
    padding: 0;
}
svg {
    width: 16px;
    height: 16px;
    flex: none;
    display: block;
}
.sprite {
    display: none;
}
/* small triangles used for every drop-down arrow */
.caret {
    display: inline-block;
    border: 3px solid transparent;
    border-top-color: #c3c7cd;
    border-bottom: 0;
    flex: none;
}
.caret.wide {
    border-width: 4px 4px 0;
    border-top-color: #dfe2e6;
    margin: 0 0 2px 2px;
}
.caret.dark {
    border-width: 5px 4px 0;
    border-top-color: #444;
}

/* menu bar */
.menubar {
    flex: none;
    height: 26px;
    padding-top: 6px;
    display: flex;
    color: #c5c9cf;
}
.menu {
    padding: 2px 9px;
    white-space: nowrap;
}
.menu.active {
    background: #3c4554;
    color: #fff;
    padding: 2px 8px 2px 4px;
    margin-right: 1px;
}
.collapse {
    display: flex;
    align-items: center;
    gap: 4px;
    margin-left: 16px;
}
.collapse-box {
    width: 15px;
    height: 8px;
    background: #c3c4c6;
    display: flex;
    align-items: center;
    justify-content: center;
}
.up {
    border: 3px solid transparent;
    border-top: 0;
    border-bottom-color: #444;
}
.capture-mark {
    margin: -6px 174px 0 auto;
    width: 44px;
    height: 1px;
    background: #5b5bff;
}

/* ribbon */
.ribbon {
    flex: none;
    height: 99px;
    display: flex;
    background: #3c4554;
}
.panel {
    flex: none;
    display: flex;
    flex-direction: column;
    border-right: 1px solid #252c36;
    margin: 1px 0;
    color: #6c7480;
}
.panel h2 {
    color: #f2f3f5;
    text-align: center;
    padding-top: 3px;
    white-space: nowrap;
}
.tools {
    height: 77px;
    padding-top: 4px;
    display: flex;
}
.tools svg {
    color: #79808b;
}
.palettes { width: 106px; }
.explore { width: 53px; }
.optimize { width: 80px; }
.ground { width: 129px; }
.design { width: 322px; }
.views { width: 133px; }
.draw { width: 118px; }
.modify { width: 250px; }
.layers { width: 273px; }
.clipboard { width: 92px; border: 0; }
.big {
    flex: 1;
    display: flex;
    flex-direction: column;
    align-items: center;
    line-height: 15px;
}
.tools .i32 {
    width: 32px;
    height: 32px;
    margin: 3px 0;
}
.palettes .big {
    flex: none;
    width: 54px;
    height: 72px;
    padding-right: 4px;
    border: 1px solid #5d9ccb;
    border-left: 0;
}
.on {
    background: #43586e;
}
.small-grid {
    display: grid;
    grid-template-columns: 24px 24px;
    grid-auto-rows: 22px;
    row-gap: 2px;
    padding: 1px 0 0 1px;
}
.sq {
    display: flex;
    align-items: center;
    justify-content: center;
}
.sq.on {
    border: 1px solid #5d9ccb;
}
.cmds {
    display: grid;
    grid-auto-rows: 24px;
    justify-content: start;
}
.cmd {
    display: flex;
    align-items: center;
    white-space: nowrap;
    gap: 5px;
}
.ground .cmds { padding-left: 26px; }
.design .cmds { padding-left: 7px; grid-template-columns: 106px 98px auto; }
.views .cmds { padding-left: 14px; }
.draw .cmds { padding-left: 6px; grid-template-columns: 37px 39px auto; }
.modify .cmds { padding-left: 7px; grid-template-columns: 73px 69px 75px auto; }
.split {
    margin-right: 12px;
}
.split .caret {
    margin-left: auto;
}
.layers .big {
    flex: none;
    width: 62px;
}
.layer-tools {
    flex: 1;
    margin-right: 2px;
}
.layer-combo {
    width: 100%;
    height: 22px;
    margin: 1px 0;
    padding: 0 2px 0 6px;
    display: flex;
    align-items: center;
    gap: 5px;
    background: #475364;
    border: 1px solid #2b323d;
}
.layer-combo .bulb {
    width: 10px;
}
.layer-combo .caret {
    margin-left: auto;
}
.swatch {
    width: 14px;
    height: 14px;
    background: #a2a7b1;
}
.layer-row {
    display: grid;
    grid-template-columns: repeat(4, 24px) auto;
    grid-auto-rows: 24px;
    padding-left: 4px;
    justify-content: start;
}
.clipboard .big {
    flex: none;
    width: 56px;
}
.clipboard .cmds {
    padding-left: 1px;
}

/* open drawings */
.doctabs {
    flex: none;
    height: 31px;
    border-bottom: 4px solid #3c4554;
    display: flex;
    align-items: center;
    padding-top: 2px;
    color: #f2f3f5;
}
.burger {
    margin: 0 9px 0 7px;
}
.burger svg {
    height: 12px;
}
.slash {
    width: 8px;
}
.start {
    margin: 0 7px 0 8px;
}
.file {
    width: 182px;
    padding-left: 7px;
    white-space: nowrap;
}
.current {
    height: 25px;
    width: 120px;
    padding-left: 16px;
    display: flex;
    align-items: center;
    gap: 4px;
    font-weight: 700;
    background: #3c4554;
    clip-path: polygon(9px 0, 100% 0, calc(100% - 9px) 100%, 0 100%);
}
.current svg {
    width: 8px;
    height: 8px;
}
.plus {
    margin: 0 10px 0 9px;
}
.plus svg {
    width: 14px;
    height: 14px;
}

/* toolspace palette */
.workspace {
    flex: 1;
    min-height: 0;
    display: flex;
}
.toolspace {
    flex: none;
    width: 457px;
    display: flex;
    background: #3c4554;
}
.ts-column {
    width: 432px;
    display: flex;
    flex-direction: column;
    color: #111;
}
.ts-title {
    flex: none;
    height: 20px;
    margin-top: 2px;
    padding: 1px 6px;
    background: #2e3440;
    color: #e4e6e9;
    border-radius: 0 4px 0 0;
}
.ts-bar {
    flex: none;
    height: 30px;
    display: flex;
    align-items: center;
    gap: 11px;
    padding-right: 6px;
}
.ts-bar .cube {
    width: 12px;
    margin-right: auto;
}
.help {
    width: 16px;
    height: 16px;
    border-radius: 8px;
    background: #d5d7da;
    color: #3c4554;
    font-weight: 700;
    line-height: 16px;
}
.ts-view {
    flex: none;
    height: 21px;
    background: #fdfdfd;
    display: flex;
    align-items: center;
    padding-right: 4px;
    overflow: hidden;
    font-family: Roboto, sans-serif;
    font-size: 11px;
}
.ts-view select {
    flex: 1;
    margin-left: -6px;
}
.ts-view svg {
    width: 10px;
    height: 6px;
}
.tree-box {
    flex: 1;
    min-height: 0;
    margin-top: 2px;
    border-top: 1px solid #8b9199;
    border-bottom: 1px solid #8b9199;
    background: #fff;
    display: flex;
    overflow: hidden;
}
.tree {
    flex: 1;
    margin-left: -4px;
    padding-top: 2px;
}
.tree li {
    height: 20px;
    display: flex;
    align-items: center;
    white-space: nowrap;
}
.tree i {
    width: 19px;
    height: 20px;
    flex: none;
    display: flex;
    align-items: center;
    justify-content: center;
}
.tree svg {
    margin: 0 7px 0 2px;
}
.tree .flag, .baselines .flag {
    width: 6px;
    height: 6px;
    margin: 0 17px 10px -4px;
}
.v {
    background: repeating-linear-gradient(#888 0 1px, transparent 1px 2px) 9px 0 / 1px 100% no-repeat;
}
.t {
    background: repeating-linear-gradient(#888 0 1px, transparent 1px 2px) 9px 0 / 1px 100% no-repeat,
        repeating-linear-gradient(90deg, #888 0 1px, transparent 1px 2px) 9px 50% / 9px 1px no-repeat;
}
.l {
    background: repeating-linear-gradient(#888 0 1px, transparent 1px 2px) 9px 0 / 1px 50% no-repeat,
        repeating-linear-gradient(90deg, #888 0 1px, transparent 1px 2px) 9px 50% / 9px 1px no-repeat;
}
.plusbox, .minusbox {
    width: 9px;
    height: 9px;
    border: 1px solid #8b8b8b;
    background: linear-gradient(#2a4fa0, #2a4fa0) center / 5px 1px no-repeat, #f4f4f4;
}
.plusbox {
    background: linear-gradient(#2a4fa0, #2a4fa0) center / 5px 1px no-repeat,
        linear-gradient(#2a4fa0, #2a4fa0) center / 1px 5px no-repeat, #f4f4f4;
}
.picked {
    background: #a6a6a6;
    height: 18px;
    line-height: 18px;
    padding-left: 4px;
    margin-left: -4px;
}
.scroll {
    width: 18px;
    border-right: 2px solid #fff;
    background: #f0f0f0;
}
.list-box {
    flex: none;
    height: 169px;
    margin-top: 8px;
    border-top: 1px solid #8b9199;
    border-right: 2px solid #e0e0e0;
    background: #fff;
    overflow: hidden;
}
.baselines {
    width: 100%;
    table-layout: fixed;
    border-collapse: collapse;
}
.c-name { width: 156px; }
.c-h, .c-v { width: 80px; }
.c-f { width: 65px; }
.baselines th {
    height: 25px;
    padding: 0 0 0 7px;
    font-weight: 400;
    text-align: left;
    white-space: nowrap;
    border-right: 1px solid #d8d8d8;
    border-bottom: 1px solid #7b95b5;
}
.baselines th:first-child {
    padding-left: 0;
}
.baselines td {
    height: 20px;
    padding: 0 0 0 3px;
    white-space: nowrap;
    overflow: hidden;
    border-right: 1px solid #f8bcbc;
    border-bottom: 1px solid #7b95b5;
}
.baselines th:last-child, .baselines td:last-child {
    border-right: 0;
}
.baselines td:first-child {
    padding: 0;
}
.baselines td svg {
    display: inline-block;
    vertical-align: middle;
    margin-left: -7px;
}
.baselines td .flag {
    margin: 0 12px 8px 1px;
}
.baselines button {
    display: block;
    width: 16px;
    height: 16px;
    margin: 0 1px 0 auto;
    border: 1px solid #666;
    background: #f0f0f0;
    line-height: 14px;
}
.green { background: #d5ffd5; }
.yellow { background: #ffffea; }
.side-tabs {
    padding-top: 24px;
}
/* label reads bottom to top, so the tab is turned round */
.side-tab {
    width: 20px;
    height: 100px;
    writing-mode: vertical-rl;
    transform: rotate(180deg);
    border: 0 solid #252c36;
    border-width: 0 0 2px 2px;
    border-radius: 0 0 0 5px;
    text-align: right;
    padding-bottom: 29px;
    line-height: 16px;
}

/* model space */
.canvas {
    flex: 1;
    min-width: 0;
    position: relative;
}
.drawing {
    width: 100%;
    height: 100%;
}
.crisp {
    shape-rendering: crispEdges;
}
.viewport-label {
    position: absolute;
    left: 3px;
    top: 6px;
}
.road-edge { stroke: #0080ff; stroke-width: 28; }
.road-bed { stroke: #2a1230; stroke-width: 14; }
.road-lane { stroke: #2b00b8; stroke-width: 11; }
.road-inner { stroke: #2a1838; stroke-width: 8; }
.road-ticks { stroke: #f09090; stroke-width: 5; stroke-dasharray: 1 12; }
.road-center { stroke: #e8001c; stroke-width: 1; }
.station text, .label-box text {
    font-size: 6px;
    fill: #f08a8a;
}
.label-box text {
    font-family: "Liberation Sans", sans-serif;
    font-size: 5px;
}
.cube-text text {
    font-family: "Liberation Sans", sans-serif;
    font-size: 20px;
    font-weight: 700;
    fill: #b3b6b8;
}
.cube-text .top {
    font-size: 14px;
    fill: #4c5460;
}
.cube-text .wcs {
    font-size: 12px;
    font-weight: 400;
    fill: #43454f;
}

/* corridor properties dialog */
.dialog {
    position: absolute;
    left: 148px;
    right: 137px;
    top: 275px;
    background: #f0f0f0;
    color: #111;
    border-radius: 8px;
    overflow: hidden;
    font-family: Roboto, sans-serif;
    font-size: 11px;
    box-shadow: 0 0 0 1px #50565e, 0 10px 36px rgba(0, 0, 0, .5);
}
.dlg-title {
    height: 30px;
    padding: 0 10px 0 8px;
    display: flex;
    align-items: center;
    gap: 7px;
    font-family: "Open Sans", "Noto Sans", sans-serif;
    font-size: 12px;
    background: linear-gradient(90deg, #eaf4fb, #e5f8f8 50%, #e9f8e6 68%, #e6f8ef);
}
.c3d {
    width: 15px;
}
.close {
    margin-left: auto;
}
.close svg {
    width: 10px;
    height: 10px;
}
.dlg-tabs {
    display: flex;
    align-items: flex-end;
    padding: 7px 9px 0;
    height: 28px;
}
.dlg-tabs button {
    height: 19px;
    padding: 0 4px 2px 2px;
    border: 1px solid #fff;
    border-right: 2px solid #777;
    border-bottom: 0;
    white-space: nowrap;
}
.dlg-tabs .sel {
    height: 21px;
    padding: 0 7px 4px 4px;
    background: #fafafa;
}
.dlg-page {
    margin: 0 7px;
    height: 376px;
    padding: 10px 14px 0;
    background: #fafafa;
    border: 1px solid #fff;
    border-right: 2px solid #777;
    border-bottom: 2px solid #777;
}
.dlg-page label {
    display: block;
}
.style-row {
    display: flex;
    position: relative;
    height: 20px;
    margin: 2px 0 12px;
}
.combo {
    width: 1077px;
    display: flex;
    align-items: center;
    background: #fff;
    border: 1px solid #777;
    padding: 0 4px 0 3px;
}
.combo select {
    flex: 1;
    margin-left: 3px;
}
.combo .chev {
    width: 10px;
    height: 6px;
}
.edit-split, .pick {
    border: 1px solid #ccc;
    border-radius: 4px;
    background: #fff;
    margin-left: 8px;
    display: flex;
}
.edit-split {
    width: 36px;
}
.edit-split svg, .pick svg {
    margin: 1px 2px;
}
.arrow {
    border-left: 1px solid #999;
    padding: 0 2px;
    display: flex;
    align-items: center;
}
.pick {
    width: 22px;
}
.reset {
    width: 161px;
    margin-left: auto;
    border: 1px solid #e2e2e2;
    border-radius: 3px;
    color: #848484;
}
.drop {
    position: absolute;
    left: 0;
    top: 20px;
    width: 1152px;
    height: 157px;
    background: #fff;
    border: 1px solid #555;
}
.drop li {
    height: 16px;
    display: flex;
    align-items: center;
    padding-left: 2px;
}
.drop i {
    width: 20px;
    height: 16px;
}
.drop .first {
    background: repeating-linear-gradient(#888 0 1px, transparent 1px 2px) 9px 100% / 1px 50% no-repeat,
        repeating-linear-gradient(90deg, #888 0 1px, transparent 1px 2px) 9px 50% / 9px 1px no-repeat;
}
.drop span {
    padding: 0 2px 0 1px;
    margin-left: 3px;
}
.hot span {
    background: #0078d7;
    color: #fff;
}
.codes {
    width: 100%;
    table-layout: fixed;
    border-collapse: collapse;
    border-top: 1px solid #8a8f98;
}
.w178 { width: 179px; }
.w62 { width: 62px; }
.w104 { width: 104px; }
.w134 { width: 134px; }
.codes thead td {
    height: 21px;
    padding: 0;
    background: #fff;
}
.codes tbody {
    border: 1px solid #7d8188;
    background: #ffffea;
}
.codes tbody td {
    height: 250px;
    padding: 0;
    border-right: 1px solid #f9bdb6;
}
.codes tbody td:last-child {
    border-right: 1px solid #7d8188;
}
.dlg-foot {
    display: flex;
    justify-content: flex-end;
    gap: 8px;
    padding: 14px 7px 9px;
}
.dlg-foot button {
    width: 76px;
    height: 20px;
    background: #fdfdfd;
    border: 1px solid #d0d0d0;
    border-radius: 4px;
}
.grip {
    position: absolute;
    right: 0;
    bottom: 0;
    width: 12px;
    height: 12px;
}
```
